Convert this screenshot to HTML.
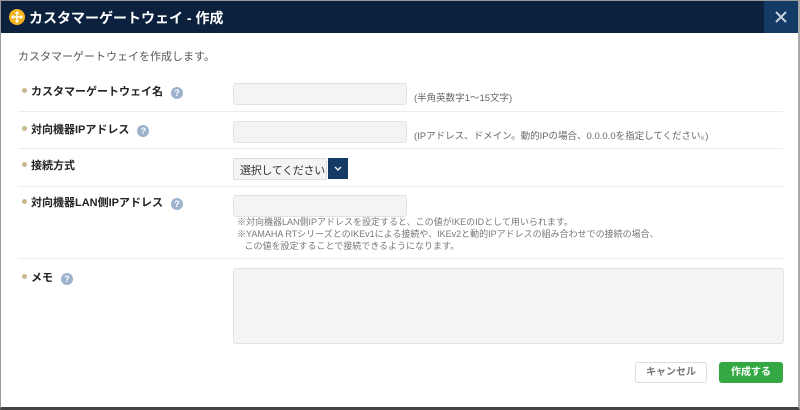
<!DOCTYPE html>
<html><head><meta charset="utf-8"><style>
*{box-sizing:border-box;margin:0;padding:0}
body{width:800px;height:410px;overflow:hidden;background:#fff;font-family:"Liberation Sans","Noto Sans CJK JP",sans-serif;position:relative;color:#333}
.frame{position:absolute;left:0;top:0;width:800px;height:410px;border:1px solid #999;border-right:2px solid #aaa;border-bottom:3px solid #444}
.hdr{position:absolute;left:1px;top:1px;width:797px;height:32px;background:#0b213d}
.hdr .t{position:absolute;left:28px;top:7px;color:#fff;font-size:14px;font-weight:bold}
.ic{position:absolute;left:8px;top:8px;width:16px;height:16px}
.cls{position:absolute;right:0;top:0;width:34px;height:32px;background:#143a66}
.abs{position:absolute}
.desc{left:18px;top:48px;font-size:11px;color:#555}
.lab{position:absolute;left:22px;font-size:11px;font-weight:bold;color:#222;white-space:nowrap}
.lab:before{content:"";display:inline-block;width:5px;height:5px;border-radius:50%;background:#c8b98a;margin-right:4px;vertical-align:2px}
.q{display:inline-block;width:12px;height:12px;border-radius:50%;background:#9db3cc;color:#fff;font-size:9px;text-align:center;line-height:12px;margin-left:8px;vertical-align:-1px}
.sep{position:absolute;left:18px;width:765px;height:1px;background:#ececec}
.inp{position:absolute;left:233px;width:174px;height:22px;background:#f4f4f4;border:1px solid #e2e2e2;border-radius:3px}
.hint{position:absolute;left:414px;font-size:9.5px;color:#666;white-space:nowrap}
.note{position:absolute;left:237px;font-size:9px;color:#777;line-height:12px;white-space:nowrap}
</style></head><body>
<div class="frame"></div>
<div class="hdr"><svg class="ic" viewBox="0 0 16 16"><circle cx="8" cy="8" r="8" fill="#f3b51f"/><path d="M8 3v10M3 8h10M6.5 4.5L8 3l1.5 1.5M6.5 11.5L8 13l1.5-1.5M4.5 6.5L3 8l1.5 1.5M11.5 6.5L13 8l-1.5 1.5" stroke="#fff" stroke-width="1.4" fill="none"/></svg><div class="t">カスタマーゲートウェイ - 作成</div><div class="cls"><svg width="34" height="32" viewBox="0 0 34 32"><path d="M12 11l10 10M22 11l-10 10" stroke="#c8d0da" stroke-width="2"/></svg></div></div>
<div class="abs desc">カスタマーゲートウェイを作成します。</div>
<div class="lab" style="top:83px">カスタマーゲートウェイ名<span class="q">?</span></div>
<div class="inp" style="top:83px"></div><div class="hint" style="top:90px">(半角英数字1～15文字)</div>
<div class="sep" style="top:111px"></div>
<div class="lab" style="top:121px">対向機器IPアドレス<span class="q">?</span></div>
<div class="inp" style="top:121px"></div><div class="hint" style="top:128px">(IPアドレス、ドメイン。動的IPの場合、0.0.0.0を指定してください。)</div>
<div class="sep" style="top:148px"></div>
<div class="lab" style="top:157px">接続方式</div>
<div class="abs" style="left:233px;top:158px;width:94px;height:22px;background:#f4f4f4;border:1px solid #ddd;border-radius:2px;font-size:11px;padding:3px 0 0 6px;color:#333;white-space:nowrap;overflow:hidden;letter-spacing:-0.3px">選択してください</div>
<div class="abs" style="left:328px;top:158px;width:20px;height:21px;background:#143a66"><svg width="20" height="21"><path d="M7 9l3 3 3-3" stroke="#fff" stroke-width="1.3" fill="none"/></svg></div>
<div class="sep" style="top:186px"></div>
<div class="lab" style="top:194px">対向機器LAN側IPアドレス<span class="q">?</span></div>
<div class="inp" style="top:195px"></div>
<div class="note" style="top:216px">※対向機器LAN側IPアドレスを設定すると、この値がIKEのIDとして用いられます。<br>※YAMAHA RTシリーズとのIKEv1による接続や、IKEv2と動的IPアドレスの組み合わせでの接続の場合、<br>&nbsp;&nbsp;&nbsp;この値を設定することで接続できるようになります。</div>
<div class="sep" style="top:258px"></div>
<div class="lab" style="top:269px">メモ<span class="q">?</span></div>
<div class="abs" style="left:233px;top:268px;width:551px;height:76px;background:#f4f4f4;border:1px solid #e2e2e2;border-radius:3px"></div>
<div class="abs" style="left:635px;top:362px;width:72px;height:21px;border:1px solid #ddd;border-radius:3px;font-size:10px;font-weight:bold;color:#777;text-align:center;line-height:19px">キャンセル</div>
<div class="abs" style="left:719px;top:362px;width:64px;height:21px;background:#34a843;border-radius:3px;font-size:10px;font-weight:bold;color:#fff;text-align:center;line-height:21px">作成する</div>
</body></html>
